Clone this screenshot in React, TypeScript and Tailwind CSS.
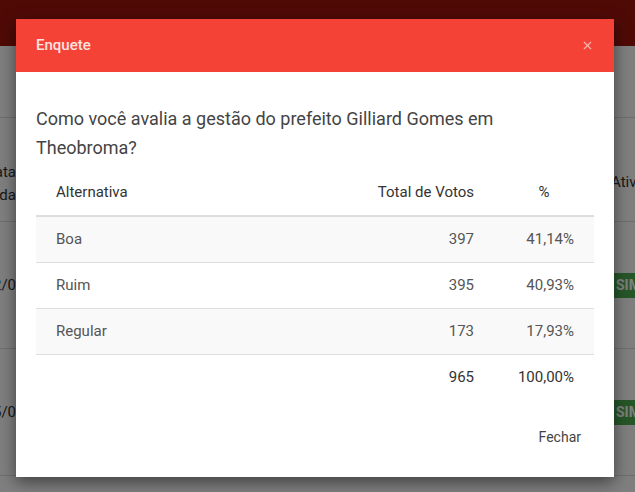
import { X } from 'lucide-react';

const rows = [
  { label: 'Boa', votes: 397, pct: '41,14%' },
  { label: 'Ruim', votes: 395, pct: '40,93%' },
  { label: 'Regular', votes: 173, pct: '17,93%' },
];

function PageBehind() {
  return (
    <div className="h-[492px] w-[635px] overflow-hidden bg-white">
      {/* navbar */}
      <div className="h-[46px] bg-[#a0140c]" />
      <div className="h-[71px]" />
      {/* table header */}
      <div className="flex h-[105px] items-start justify-between border-t border-b border-[#ddd] text-[15px] text-[#333]">
        <div className="mt-[43px] flex w-[16px] flex-col items-end overflow-hidden leading-[23px]">
          <span className="whitespace-nowrap">Data</span>
          <span className="whitespace-nowrap">Cadastrada</span>
        </div>
        <div className="mt-[53px] w-[24px] overflow-hidden leading-[23px]">
          <span className="whitespace-nowrap">Ativo</span>
        </div>
      </div>
      {/* rows */}
      {['12/0', '15/0'].map((d) => (
        <div key={d} className="flex h-[127px] items-center justify-between border-b border-[#ddd] text-[15px] text-[#333]">
          <div className="flex w-[16px] justify-end overflow-hidden">
            <span className="whitespace-nowrap">{d}</span>
          </div>
          <div className="w-[21px] overflow-hidden">
            <span className="block w-[34px] bg-[#4caf50] py-[4px] pl-[2px] text-[14px] font-bold leading-[17px] text-white">SIM</span>
          </div>
        </div>
      ))}
    </div>
  );
}

export default function App() {
  return (
    <div className="relative h-[492px] w-[635px] overflow-hidden" style={{ fontFamily: 'Roboto, "Noto Sans", sans-serif' }}>
      <PageBehind />
      <div className="absolute inset-0 bg-black/50" />

      {/* modal */}
      <div className="absolute left-[16px] top-[19px] flex h-[458px] w-[598px] flex-col bg-white shadow-[0_5px_15px_rgba(0,0,0,0.5)]">
        <div className="flex h-[53px] items-center justify-between bg-[#f44336] px-5">
          <span className="text-[15px] font-medium text-[#fde3e0]">Enquete</span>
          <X className="h-[13px] w-[13px] text-[#fbb8b2]" strokeWidth={2} />
        </div>

        <div className="px-5 pt-[32px]">
          <p className="text-[18px] leading-[29px] text-[#444]">
            Como você avalia a gestão do prefeito Gilliard Gomes em Theobroma?
          </p>

          <div className="mt-[8px] text-[15px]">
            <div className="flex h-[47px] items-center border-b-2 border-[#ddd] text-[#333]">
              <div className="flex-1 pl-5">Alternativa</div>
              <div className="w-[150px] pr-5 text-right">Total de Votos</div>
              <div className="w-[100px] text-center">%</div>
            </div>
            {rows.map((r, i) => (
              <div
                key={r.label}
                className={`flex h-[46px] items-center border-b border-[#ddd] text-[#555] ${i % 2 === 0 ? 'bg-[#f9f9f9]' : 'bg-white'}`}
              >
                <div className="flex-1 pl-5">{r.label}</div>
                <div className="w-[150px] pr-5 text-right">{r.votes}</div>
                <div className="w-[100px] pr-5 text-right">{r.pct}</div>
              </div>
            ))}
            <div className="flex h-[44px] items-center text-[#333]">
              <div className="flex-1 pl-5" />
              <div className="w-[150px] pr-5 text-right">965</div>
              <div className="w-[100px] pr-5 text-right">100,00%</div>
            </div>
          </div>
        </div>

        <div className="mt-[20px] flex justify-end pr-5">
          <button className="h-9 px-[13px] text-[14px] text-[#444]">Fechar</button>
        </div>
      </div>
    </div>
  );
}
